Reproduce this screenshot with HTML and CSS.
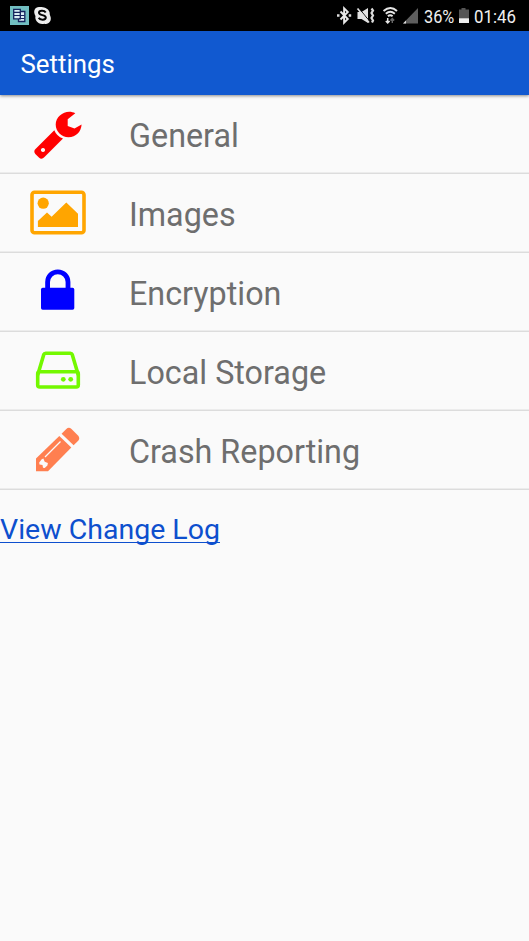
FILE: index.html
```html
<!DOCTYPE html>
<html lang="en">
<head>
<meta charset="utf-8">
<title>Settings</title>
<link rel="stylesheet" href="styles.css">
</head>
<body>
<div class="status">
  <svg class="status-left" viewBox="0 0 60 31">
    <rect x="10" y="6" width="19" height="19" fill="#72bfc1"/>
    <g fill="#d9eef5" stroke="#15235d" stroke-width="1.3"><path d="M18.5 11.5h6.3v10h-6.3z"/><path d="M13.700 9.300h6.600v9.600h-6.600z"/></g>
    <path d="M14 12.300h6M14 15.500h10.500M19 18.500h5.500" stroke="#15235d" stroke-width="1.200"/>
    <path d="M39 7c2-.4 9 0 10.500 5 .3 1.500.1 2.500.8 4 2 5-2 9-6 7.700C38 25 34.500 20 35.500 16 32.500 11 35 7 39 7z" fill="#eee"/>
    <path d="M45.700 12.500c-1.500-2.500-6.700-2.200-6.700.3 0 3.200 6.800 1.400 6.800 4.700 0 2.800-5.700 3-7.100.3" fill="none" stroke="#050505" stroke-width="2"/>
  </svg>
  <svg class="status-icons" viewBox="334 0 86 31">
    <path d="M340.500 11.500l7.300 7.500-3.700 3.700V8.300l3.700 3.700-7.300 7.500" fill="none" stroke="#e8e8e8" stroke-width="1.900"/>
    <path d="M337 14.300h2.500v2.400H337zm11.700 0h2.500v2.400h-2.500z" fill="#ddd"/>
    <path d="M357.500 12h4l6.500-4v15l-6.500-4h-4z" fill="#e2e2e2"/>
    <path d="M358.700 8l11.500 14" stroke="#000" stroke-width="1"/>
    <path d="M357.500 8.500l11.500 14" stroke="#e2e2e2" stroke-width="1.700"/>
    <path d="M371.500 8.500l1.500 2-1.500 2.500 1.500 2.500-1.500 2.500 1.500 2.500-1 2" fill="none" stroke="#ddd" stroke-width="2.200"/>
    <path d="M383.500 11q7-6 13.500 0M385.800 13.800q4.500-4 9 0M387.900 16.300q2.300-2 4.700 0" fill="none" stroke="#e6e6e6" stroke-width="1.900"/>
    <path d="M387.700 18v5M385.800 21l1.900 2 1.900-2" fill="none" stroke="#e6e6e6" stroke-width="1.500"/>
    <path d="M392.300 23v-4.500M390.400 20.500l1.900-2 1.900 2" fill="none" stroke="#666" stroke-width="1.400"/>
    <path d="M418 8v15.500h-15z" fill="#5e5e5e"/><path d="M403 23.500l3-3v3z" fill="#ddd"/>
  </svg>
  <span class="percent">36%</span>
  <svg class="battery" viewBox="458 0 12 31"><path d="M461.500 8h4v1.500h3.500V23h-10V9.500h2.500z" fill="#555"/><path d="M459 18.300h10V23h-10z" fill="#eee"/></svg>
  <span class="clock">01:46</span>
</div>
<header class="appbar">Settings</header>
<main>
  <div class="row">
    <svg class="icon" viewBox="0 95 129 79" fill="#f00">
      <path d="M75.300 113.200C67 108.500 55.700 115 55.700 124.500 55.700 131.500 61.500 137.200 68.500 137.200 76 137.200 81.200 131.500 81.600 124.400L74.500 128.400 67.700 126V119.200z"/>
      <path fill-rule="evenodd" d="M54.300 130.300Q56.700 136.400 63 138.500L44.500 157Q41.700 160.200 38.900 157.500L35.300 153.900Q33 151 36 148.500zM43 147.900a2.100 2.100 0 1 0 .01 0z"/>
    </svg><span class="label">General</span>
  </div>
  <div class="row">
    <svg class="icon" viewBox="0 174 129 79" fill="orange">
      <rect x="32" y="192.200" width="52" height="40.600" rx="2.500" fill="none" stroke="orange" stroke-width="3.600"/>
      <circle cx="43.200" cy="203.200" r="5.600"/>
      <path d="M37.900 227v-6l9.100-8.500 4.600 4.300 14.700-14.200L78 213.800V227z"/>
    </svg><span class="label">Images</span>
  </div>
  <div class="row">
    <svg class="icon" viewBox="0 253 129 79" fill="#00f">
      <rect x="41" y="287.800" width="33.300" height="22" rx="1.700"/>
      <path d="M47.600 289v-7a10.200 10.200 0 0 1 20.400 0v7" fill="none" stroke="#00f" stroke-width="4.800"/>
    </svg><span class="label">Encryption</span>
  </div>
  <div class="row">
    <svg class="icon" viewBox="0 332 129 79" fill="none" stroke="#73f800" stroke-width="3.600">
      <rect x="37.700" y="371.800" width="40.600" height="15.200" rx="2"/>
      <path d="M37.700 375L43.700 354.700Q44.200 353.300 45.700 353.300H70.300Q71.800 353.300 72.300 354.700L78.300 375"/>
      <g fill="#73f800" stroke="none"><circle cx="63.300" cy="379.300" r="2.400"/><circle cx="70.700" cy="379.300" r="2.400"/></g>
    </svg><span class="label">Local Storage</span>
  </div>
  <div class="row">
    <svg class="icon" viewBox="0 411 129 79" fill="#ff7f50">
      <path d="M36 471.300V458.500L59.300 436 71.300 447.500 48 471.300z"/>
      <path d="M61.600 433.700L66.300 428.900Q68.800 426.600 71.500 429L78 435.500Q80.400 438.200 78.200 440.700L73.600 445.200z"/>
      <path d="M45 457L60.500 441.500" stroke="#fafafa" stroke-width="1.200"/>
      <path d="M41.700 459.300l1.700-.8 1.300 3.300 3.200 1.200-.5 2.400-2.700 2.700-1.700-.3-.5-2.700-3-.7-.3-2z" fill="#fafafa"/>
    </svg><span class="label">Crash Reporting</span>
  </div>
  <a class="log" href="#">View Change Log</a>
</main>
</body>
</html>
```

FILE: styles.css
```css
* { box-sizing: border-box; }
body { margin: 0; height: 941px; overflow: hidden; background: #fafafa; font-family: Roboto, sans-serif; }
svg { display: block; flex: none; }
.status { height: 31px; background: #000; color: #f0f0f0; display: flex; font-size: 19px; line-height: 33px; }
.status-left { width: 60px; height: 31px; }
.status-icons { width: 86px; height: 31px; margin-left: 274px; }
.percent { width: 34px; margin-left: 4px; transform: scaleX(.86); transform-origin: left; }
.battery { width: 12px; height: 31px; }
.clock { margin-left: 4px; transform: scaleX(.885); transform-origin: left; }
.appbar { height: 64px; padding-left: 20.500px; background: #1159d0; color: #fff; font-size: 25.800px; line-height: 67px; box-shadow: 0 1px 3px rgba(0, 0, 0, .45); }
.row { height: 79px; display: flex; background: linear-gradient(#dcdcdc, #dcdcdc) 0 78px / 100% 1px no-repeat, linear-gradient(#ececec, #ececec) 0 77px / 100% 1px no-repeat; }
.icon { width: 129px; height: 79px; }
.label { height: 79px; color: #6e6e6e; font-size: 32.300px; line-height: 83px; white-space: nowrap; }
.log { display: block; width: max-content; margin-top: 22px; color: #0d4fce; font-size: 28.500px; line-height: 36px; text-decoration-thickness: 1px; text-underline-offset: 3px; text-decoration-skip-ink: none; }
```
